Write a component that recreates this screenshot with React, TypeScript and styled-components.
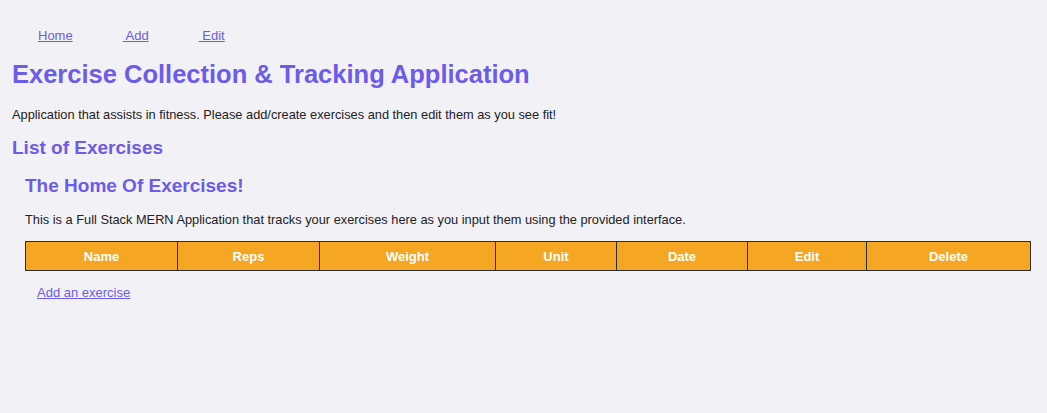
import React from 'react'
import styled, { createGlobalStyle } from 'styled-components'

const COLUMNS = [
  { label: 'Name', width: 151 },
  { label: 'Reps', width: 141 },
  { label: 'Weight', width: 175 },
  { label: 'Unit', width: 120 },
  { label: 'Date', width: 130 },
  { label: 'Edit', width: 118 },
  { label: 'Delete', width: 163 },
]

const NAV = ['Home', ' Add', ' Edit']

const GlobalStyle = createGlobalStyle`
  body {
    margin: 0;
    padding: 0 12px;
    background: #f2f1f6;
    color: #222222;
    font-family: "Liberation Sans", Arial, sans-serif;
    font-size: 13px;
  }
`

export default function App() {
  return (
    <>
      <GlobalStyle />
      <Header>
        <Nav>
          {NAV.map((item) => (
            <NavLink href="#" key={item}>{item}</NavLink>
          ))}
        </Nav>
        <Title>Exercise Collection &amp; Tracking Application</Title>
        <Intro>Application that assists in fitness. Please add/create exercises and then edit them as you see fit!</Intro>
      </Header>
      <SubTitle>List of Exercises</SubTitle>
      <HomeSection>
        <SectionTitle>The Home Of Exercises!</SectionTitle>
        <Blurb>This is a Full Stack MERN Application that tracks your exercises here as you input them using the provided interface.</Blurb>
        <Table>
          <thead>
            <tr>
              {COLUMNS.map((col) => (
                <Th key={col.label} style={{ width: col.width }}>{col.label}</Th>
              ))}
            </tr>
          </thead>
          <tbody></tbody>
        </Table>
        <AddLink href="#">Add an exercise</AddLink>
      </HomeSection>
    </>
  )
}

const Header = styled.header`
  display: flex;
  flex-direction: column;
`

const Nav = styled.nav`
  display: flex;
  gap: 50px;
  padding: 28px 0 0 26px;
`

const NavLink = styled.a`
  color: #6c5ce7;
  font-size: 13px;
  white-space: pre;
`

const Title = styled.h1`
  margin: 17px 0 0;
  color: #6c5ce7;
  font-size: 25.5px;
  font-weight: bold;
`

const Intro = styled.p`
  margin: 18px 0 0;
  font-size: 12.8px;
`

const SubTitle = styled.h2`
  margin: 15px 0 0;
  color: #6c5ce7;
  font-size: 19px;
  font-weight: bold;
`

const HomeSection = styled.section`
  padding-left: 13px;
  display: flex;
  flex-direction: column;
  align-items: flex-start;
`

const SectionTitle = styled.h3`
  margin: 16px 0 0;
  color: #6c5ce7;
  font-size: 19px;
  font-weight: bold;
`

const Blurb = styled.p`
  margin: 15px 0 0;
  font-size: 12.8px;
`

const Table = styled.table`
  margin-top: 14px;
  border-collapse: collapse;
  table-layout: fixed;
`

const Th = styled.th`
  background: #f5a623;
  color: #ffffff;
  border: 1px solid #2d2d35;
  height: 28px;
  padding: 0;
  font-size: 13px;
  font-weight: bold;
`

const AddLink = styled.a`
  margin: 14px 0 0 12px;
  color: #6c5ce7;
  font-size: 13px;
`
